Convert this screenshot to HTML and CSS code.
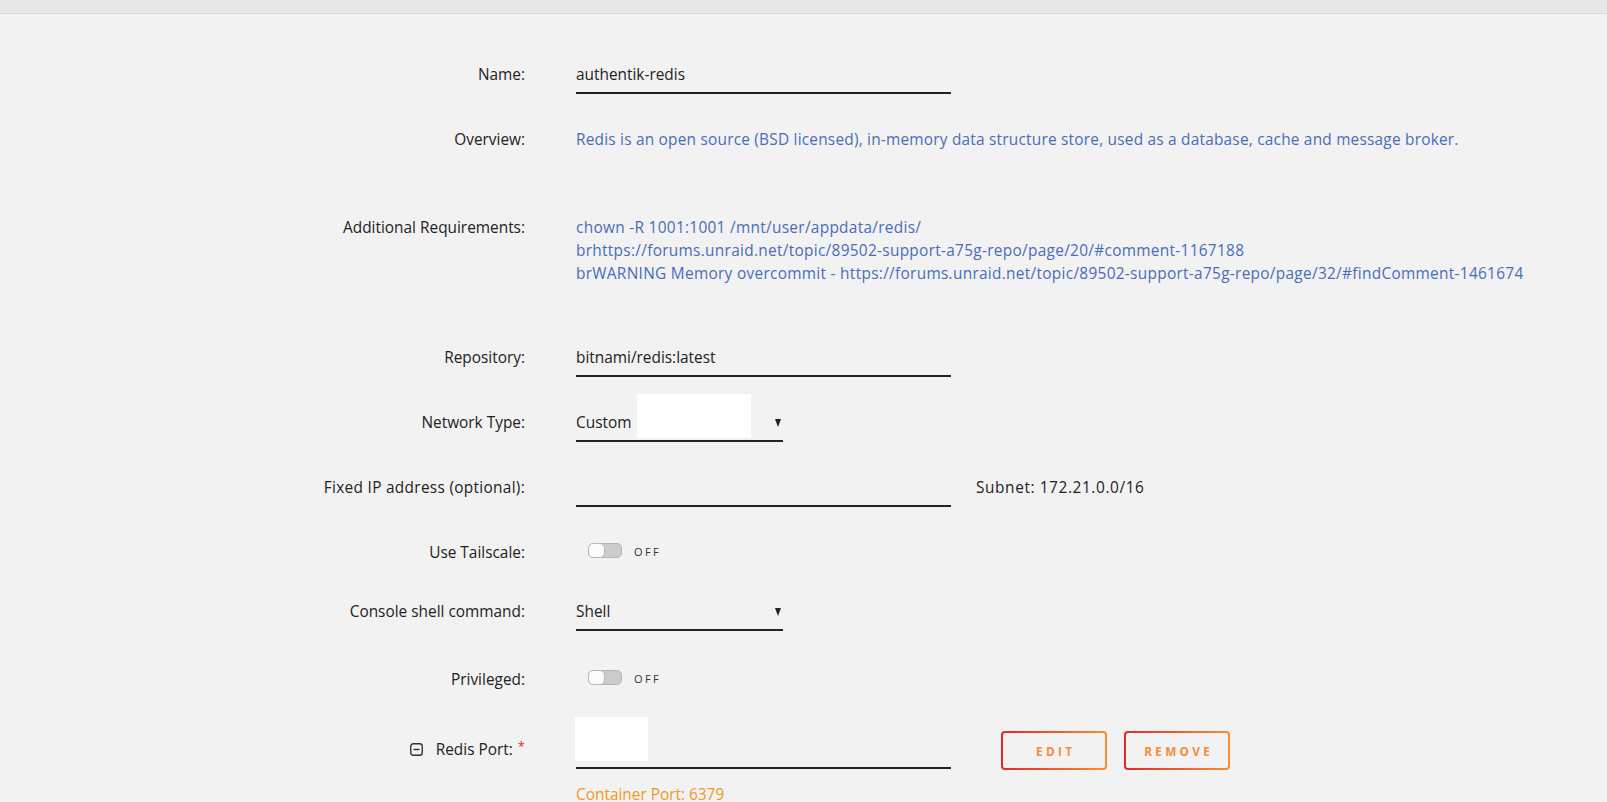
FILE: index.html
```html
<!DOCTYPE html>
<html lang="en">
<head>
<meta charset="utf-8">
<title>Add Container</title>
<link rel="stylesheet" href="styles.css">
</head>
<body>
<header class="topbar"></header>
<main class="form">
  <div class="row">
    <div class="label">Name:</div>
    <div class="value"><div class="input">authentik-redis</div></div>
  </div>
  <div class="row row-overview">
    <div class="label">Overview:</div>
    <div class="value"><div class="info">Redis is an open source (BSD licensed), in-memory data structure store, used as a database, cache and message broker.</div></div>
  </div>
  <div class="row row-req">
    <div class="label label-req">Additional Requirements:</div>
    <div class="value">
      <div class="info info-lines">
        <div>chown -R 1001:1001 /mnt/user/appdata/redis/</div>
        <div>brhttps://forums.unraid.net/topic/89502-support-a75g-repo/page/20/#comment-1167188</div>
        <div>brWARNING Memory overcommit - https://forums.unraid.net/topic/89502-support-a75g-repo/page/32/#findComment-1461674</div>
      </div>
    </div>
  </div>
  <div class="row">
    <div class="label">Repository:</div>
    <div class="value"><div class="input">bitnami/redis:latest</div></div>
  </div>
  <div class="row">
    <div class="label">Network Type:</div>
    <div class="value">
      <div class="select">
        <span>Custom</span>
        <span class="blank blank-net"></span>
        <span class="arrow"></span>
      </div>
    </div>
  </div>
  <div class="row">
    <div class="label label-wide">Fixed IP address (optional):</div>
    <div class="value">
      <div class="input"></div>
      <span class="subnet">Subnet: 172.21.0.0/16</span>
    </div>
  </div>
  <div class="row row-tail">
    <div class="label">Use Tailscale:</div>
    <div class="value value-switch">
      <span class="switch"><span class="knob"></span></span>
      <span class="switch-text">OFF</span>
    </div>
  </div>
  <div class="row row-console">
    <div class="label">Console shell command:</div>
    <div class="value">
      <div class="select">
        <span>Shell</span>
        <span class="arrow"></span>
      </div>
    </div>
  </div>
  <div class="row row-priv">
    <div class="label">Privileged:</div>
    <div class="value value-switch">
      <span class="switch"><span class="knob"></span></span>
      <span class="switch-text">OFF</span>
    </div>
  </div>
  <div class="row row-port">
    <div class="label">
      <svg class="collapse" width="13" height="13" viewBox="0 0 13 13"><rect x="0.75" y="0.75" width="11.5" height="11.5" rx="2.5" fill="none" stroke="#333" stroke-width="1.4"/><path d="M3.5 6.5h6" stroke="#333" stroke-width="1.4"/></svg>Redis Port:<span class="req">*</span>
    </div>
    <div class="value">
      <div class="input input-port"><span class="blank blank-port"></span></div>
      <div class="buttons">
        <button class="btn" type="button"><span>EDIT</span></button>
        <button class="btn" type="button"><span>REMOVE</span></button>
      </div>
    </div>
  </div>
  <div class="row row-note">
    <div class="label"></div>
    <div class="value"><span class="note">Container Port: 6379</span></div>
  </div>
</main>
</body>
</html>
```

FILE: styles.css
```css
* {
  box-sizing: border-box;
}

html,
body {
  margin: 0;
}

body {
  background: #f2f2f2;
  font-family: "Open Sans", "Noto Sans", sans-serif;
  font-size: 15.4px;
  line-height: 24px;
  color: #222;
  overflow: hidden;
}

.topbar {
  height: 14px;
  background: #e7e7e7;
  border-bottom: 1px solid #dadada;
}

.form {
  padding-top: 49px;
}

.row {
  display: flex;
  column-gap: 51px;
  min-height: 65px;
}

.row-overview {
  min-height: 87px;
}

.row-req {
  min-height: 131px;
}

.row-tail {
  min-height: 59px;
}

.row-console {
  min-height: 68px;
}

.row-priv {
  min-height: 70px;
}

.row-port {
  min-height: 45px;
}

.label {
  flex: 0 0 525px;
  text-align: right;
  white-space: nowrap;
}

.label-wide {
  letter-spacing: 0.3px;
}

.label-req {
  line-height: 23px;
  padding-top: 1px;
}

.value {
  display: flex;
  align-items: flex-start;
  white-space: nowrap;
}

.input {
  width: 375px;
  height: 31px;
  padding-bottom: 5px;
  border-bottom: 2px solid #222;
  display: flex;
  align-items: flex-end;
}

.select {
  width: 207px;
  height: 31px;
  padding-bottom: 5px;
  border-bottom: 2px solid #222;
  display: flex;
  align-items: flex-end;
}

.blank {
  display: block;
  background: #fff;
  flex: none;
}

.blank-net {
  width: 114px;
  height: 44px;
  margin-left: 6px;
  margin-bottom: -3px;
}

.blank-port {
  width: 73px;
  height: 44px;
  margin-left: -1px;
  margin-bottom: 1px;
}

.arrow {
  align-self: center;
  margin-left: auto;
  margin-right: 2px;
  width: 0;
  height: 0;
  border-left: 3.5px solid transparent;
  border-right: 3.5px solid transparent;
  border-top: 8px solid #222;
}

.info {
  color: #486dba;
  letter-spacing: 0.22px;
}

.info-lines {
  line-height: 23px;
  padding-top: 1px;
  letter-spacing: 0.3px;
}

.subnet {
  margin-left: 25px;
  letter-spacing: 0.6px;
}

.value-switch {
  align-items: center;
  height: 24px;
}

.switch {
  display: block;
  width: 34px;
  height: 15px;
  margin-left: 12px;
  margin-bottom: 5px;
  background: #cbcbcb;
  border: 1px solid #b4b4b4;
  border-radius: 5px;
  position: relative;
}

.knob {
  position: absolute;
  left: -1px;
  top: -1px;
  width: 17px;
  height: 15px;
  background: #fbfbfb;
  border: 1px solid #b8b8b8;
  border-radius: 5px;
}

.switch-text {
  margin-left: 12px;
  font-size: 11px;
  letter-spacing: 2.4px;
  color: #333;
  margin-bottom: 2px;
}

.collapse {
  vertical-align: -1px;
  margin-right: 13px;
}

.req {
  color: #e8262c;
  font-size: 13px;
  margin-left: 5px;
  vertical-align: 4px;
  line-height: 0;
}

.buttons {
  display: flex;
  column-gap: 17px;
  margin-left: 50px;
  margin-top: -7px;
}

.btn {
  width: 106px;
  height: 39px;
  padding: 0;
  border: 2px solid transparent;
  border-radius: 4px;
  background:
    linear-gradient(#f2f2f2, #f2f2f2) padding-box,
    linear-gradient(90deg, #e22828, #ff8d30) border-box;
  font-family: "Open Sans", "Noto Sans", sans-serif;
  font-size: 11.8px;
  font-weight: 700;
  letter-spacing: 3.3px;
  color: #f88b3a;
  display: flex;
  align-items: center;
  justify-content: center;
}

.btn span {
  margin-right: -3.3px;
}

.note {
  color: #ed9a1f;
}
```
